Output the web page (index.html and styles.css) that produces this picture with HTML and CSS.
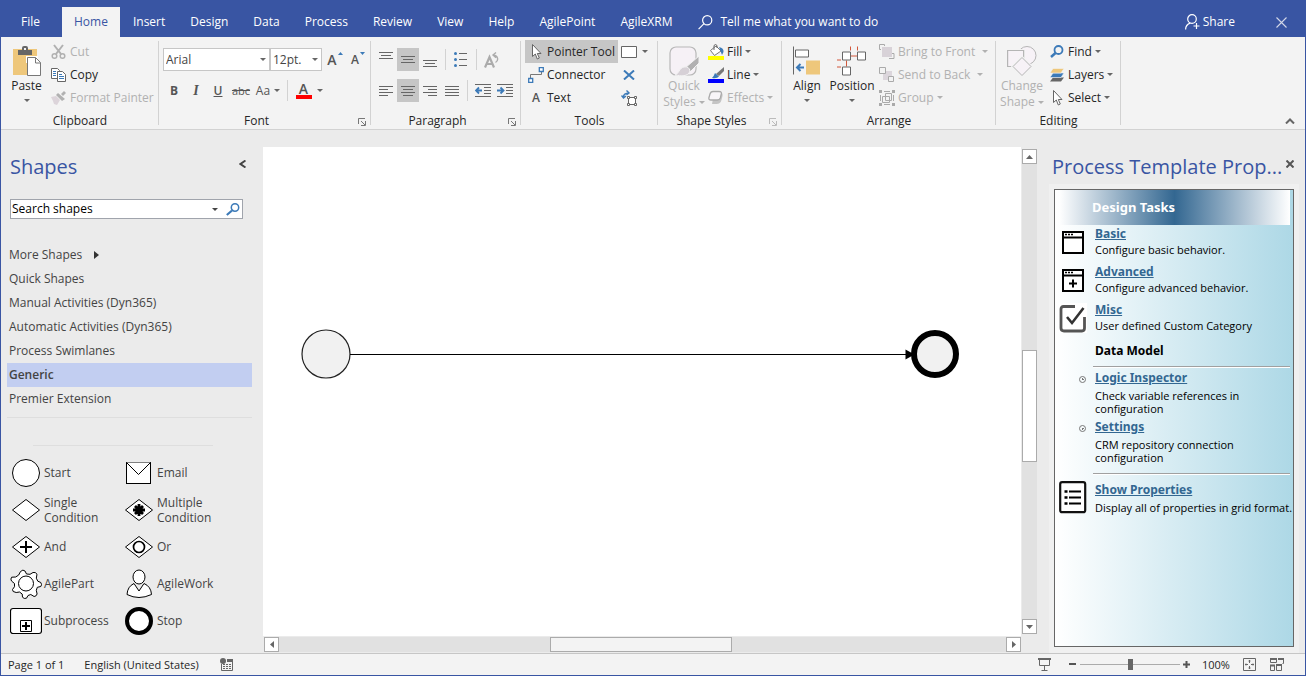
FILE: index.html
```html
<!DOCTYPE html>
<html lang="en">
<head>
<meta charset="utf-8">
<title>Process Designer</title>
<link rel="stylesheet" href="styles.css">
</head>
<body>
<div class="app">
  <header class="titlebar">
    <nav class="tabs">
      <a class="tab tab-file" href="#">File</a>
      <a class="tab tab-active" href="#">Home</a>
      <a class="tab" href="#">Insert</a>
      <a class="tab" href="#">Design</a>
      <a class="tab" href="#">Data</a>
      <a class="tab" href="#">Process</a>
      <a class="tab" href="#">Review</a>
      <a class="tab" href="#">View</a>
      <a class="tab" href="#">Help</a>
      <a class="tab" href="#">AgilePoint</a>
      <a class="tab" href="#">AgileXRM</a>
    </nav>
    <button class="title-btn tell">
      <svg width="15" height="15" viewBox="0 0 15 15" fill="none" stroke="#fff" stroke-width="1.2"><circle cx="9.2" cy="5.3" r="4.6"/><path d="M6 8.700 0.600 14.200"/></svg>
      Tell me what you want to do
    </button>
    <button class="title-btn share">
      <svg width="15" height="16" viewBox="0 0 15 16" fill="none" stroke="#fff" stroke-width="1.2"><circle cx="7" cy="5" r="4.3"/><path d="M0.600 15.500c0-3.600 2.200-5.600 4.800-6.400M8.500 12h6M11.500 9v6"/></svg>
      Share
    </button>
    <button class="title-btn close" aria-label="Close">
      <svg width="11" height="11" viewBox="0 0 11 11" stroke="#d3d8e8" stroke-width="1.1"><path d="M0.500 0.500l10 10M10.500 0.500l-10 10"/></svg>
    </button>
  </header>

  <section class="ribbon">
    <div class="group g-clipboard">
      <div class="group-body">
        <button class="big big-paste">
          <svg width="29" height="31" viewBox="0 0 29 31"><path d="M1 3h24v26H1z" fill="#eec77b"/><path d="M6 4h4V2Q10 0 12 0h2Q16 0 16 2v2h4v5H6z" fill="#666"/><path d="M12 2h2v2h-2z" fill="#f3f3f3"/><path d="M14 10h12v7h-12z" fill="#fff"/><path d="M15.500 11.500h8l5 5v13H15.500z" fill="#fff" stroke="#777"/><path d="M23.500 11.500v5.500h5" fill="none" stroke="#777"/></svg>
          <span>Paste</span><i class="caret"></i>
        </button>
        <div class="stack">
          <button class="cmd off"><svg width="16" height="16" viewBox="0 0 16 16" fill="none" stroke="#b1b1b1" stroke-width="1.500"><circle cx="3.500" cy="12" r="2.300"/><circle cx="11.500" cy="12" r="2.300"/><path d="M5 10 12 1M10 10 3 1" stroke-width="2"/></svg>Cut</button>
          <button class="cmd"><svg width="16" height="16" viewBox="0 0 16 16" fill="#fff" stroke="#666"><path d="M.5 1.500h6l2 2v8h-8z"/><path d="M6.500 4.500h5l3 3v7h-8z"/><path d="M2 4.500h3M2 6.500h3M2 8.500h3M8 7.500h3M8 9.500h5M8 11.500h5" stroke="#3c7ab8"/></svg>Copy</button>
          <button class="cmd off"><svg width="16" height="16" viewBox="0 0 16 16"><path d="M0 7l5-1 4 4-3 5-3-1-1-3z" fill="#dcd4da"/><path d="M5 5l2-2 7 6-3 2z" fill="#b1b1b1"/><path d="M10 4 13 1l2 2-3 3z" fill="#b1b1b1"/></svg>Format Painter</button>
        </div>
      </div>
      <div class="group-label">Clipboard</div>
    </div>

    <div class="group g-font">
      <div class="group-body rows">
        <div class="row">
          <span class="combo combo-font"><select aria-label="Font"><option>Arial</option></select><i class="caret"></i></span>
          <span class="combo combo-size"><select aria-label="Font size"><option>12pt.</option></select><i class="caret"></i></span>
          <button class="tool t-grow" aria-label="Increase font size"><b>A</b><svg width="5" height="3" viewBox="0 0 5 3"><path d="M0 3h5L2.500 0z" fill="#3c7ab8"/></svg></button>
          <button class="tool t-shrink" aria-label="Decrease font size"><b>A</b><svg width="5" height="3" viewBox="0 0 5 3"><path d="M0 0h5L2.500 3z" fill="#3c7ab8"/></svg></button>
        </div>
        <div class="row">
          <button class="tool t-b">B</button>
          <button class="tool t-i">I</button>
          <button class="tool t-u">U</button>
          <button class="tool t-s">abc</button>
          <button class="tool t-case">Aa<i class="caret"></i></button>
          <i class="vsep"></i>
          <button class="tool t-color"><span>A</span><i class="caret"></i></button>
        </div>
      </div>
      <div class="group-label">Font<svg class="launch" width="8" height="8" viewBox="0 0 8 8" fill="none" stroke="#777"><path d="M0.500 6V0.500H7M3 3l4 4M7.500 3v4.500H3"/></svg></div>
    </div>

    <div class="group g-para">
      <div class="group-body rows">
        <div class="row">
          <button class="tool" aria-label="Align top"><svg width="14" height="15" viewBox="0 0 14 15" stroke="#666"><path d="M0 .5h14M2 3.500h10M0 6.500h14"/></svg></button>
          <button class="tool on" aria-label="Align middle"><svg width="14" height="9" viewBox="0 0 14 9" stroke="#666"><path d="M0 1.500h14M2 4.500h10M0 7.500h14"/></svg></button>
          <button class="tool" aria-label="Align bottom"><svg width="14" height="15" viewBox="0 0 14 15" stroke="#666"><path d="M0 8.500h14M2 11.500h10M0 14.500h14"/></svg></button>
          <i class="vsep"></i>
          <button class="tool" aria-label="Bullets"><svg width="14" height="15" viewBox="0 0 14 15"><g fill="#3c7ab8"><circle cx="1.500" cy="1.500" r="1.500"/><circle cx="1.500" cy="7.500" r="1.500"/><circle cx="1.500" cy="13.500" r="1.500"/></g><path d="M5 1.500h8M5 7.500h8M5 13.500h8" stroke="#666"/></svg></button>
          <i class="vsep"></i>
          <button class="tool t-rotate" aria-label="Rotate text"><svg width="16" height="16" viewBox="0 0 16 16" fill="none" stroke="#ababab"><path d="M1 15.500 5.500 5 10 15.500M3 12h5.500" stroke-width="2.200"/><path d="M11.500 10.500C15 8.500 14 3.500 9.500 3M12 .5 9 3l3 2.800" stroke-width="1.400"/></svg></button>
        </div>
        <div class="row">
          <button class="tool" aria-label="Align left"><svg width="14" height="10" viewBox="0 0 14 10" stroke="#666"><path d="M0 .5h14M0 3.500h9M0 6.500h14M0 9.500h9"/></svg></button>
          <button class="tool on" aria-label="Center"><svg width="14" height="10" viewBox="0 0 14 10" stroke="#666"><path d="M0 .5h14M2 3.500h10M0 6.500h14M2 9.500h10"/></svg></button>
          <button class="tool" aria-label="Align right"><svg width="14" height="10" viewBox="0 0 14 10" stroke="#666"><path d="M0 .5h14M5 3.500h9M0 6.500h14M5 9.500h9"/></svg></button>
          <button class="tool" aria-label="Justify"><svg width="14" height="10" viewBox="0 0 14 10" stroke="#666"><path d="M0 .5h14M0 3.500h14M0 6.500h14M0 9.500h14"/></svg></button>
          <i class="vsep"></i>
          <button class="tool" aria-label="Decrease indent"><svg width="16" height="13" viewBox="0 0 16 13" fill="none" stroke="#666"><path d="M0 .5h16M9 3.500h7M9 6.500h7M9 9.500h7M0 12.500h16"/><path d="M7 6.500H1M4 3.500l-3 3 3 3" stroke="#3c7ab8" stroke-width="1.800"/></svg></button>
          <button class="tool" aria-label="Increase indent"><svg width="16" height="13" viewBox="0 0 16 13" fill="none" stroke="#666"><path d="M0 .5h16M9 3.500h7M9 6.500h7M9 9.500h7M0 12.500h16"/><path d="M0 6.500h6M3.500 3.500l3 3-3 3" stroke="#3c7ab8" stroke-width="1.800"/></svg></button>
        </div>
      </div>
      <div class="group-label">Paragraph<svg class="launch" width="8" height="8" viewBox="0 0 8 8" fill="none" stroke="#777"><path d="M0.500 6V0.500H7M3 3l4 4M7.500 3v4.500H3"/></svg></div>
    </div>

    <div class="group g-tools">
      <div class="group-body">
        <div class="stack stack-tools">
          <button class="cmd on"><svg width="16" height="16" viewBox="0 0 16 16"><path d="M4.500 .5v12l2.800-2.500 2 5 2-1-2-4.500h3.700z" fill="#fff" stroke="#666"/></svg>Pointer Tool</button>
          <button class="cmd"><svg width="16" height="16" viewBox="0 0 16 16" fill="none"><path d="M2.500 11V7.500h11V5" stroke="#777"/><path d="M.700 11.500h4v4h-4zM11.300.5h4v4h-4z" fill="#fff" stroke="#3c7ab8" stroke-width="1.300"/></svg>Connector</button>
          <button class="cmd"><b class="glyph">A</b>Text</button>
        </div>
        <div class="stack stack-mini">
          <button class="cmd" aria-label="Rectangle"><svg width="16" height="12" viewBox="0 0 16 12"><path d="M.5.500h15v11H.5z" fill="#fff" stroke="#666"/></svg><i class="caret"></i></button>
          <button class="cmd" aria-label="Connection point"><svg width="16" height="10" viewBox="0 0 16 10"><path d="M3 .500l10 9M13 .500l-10 9" stroke="#3c7ab8" stroke-width="2"/></svg></button>
          <button class="cmd" aria-label="Text block"><svg width="16" height="16" viewBox="0 0 16 16" fill="#fff" stroke="#666"><path d="M7.500 7.500h7v7h-7z"/><path d="M6.500 6.500h2v2h-2zM13.500 6.500h2v2h-2zM6.500 13.500h2v2h-2zM13.500 13.500h2v2h-2z"/><path d="M2.500 8C2 5 4 3 8 3M5.500 0.500 8 3 5.500 5M.5 5.500 2.500 8 5 6" fill="none" stroke="#3c7ab8" stroke-width="1.400"/></svg></button>
        </div>
      </div>
      <div class="group-label">Tools</div>
    </div>

    <div class="group g-styles">
      <div class="group-body">
        <button class="big big-quick off">
          <svg width="30" height="31" viewBox="0 0 30 31"><rect x="1" y="1" width="26" height="28" rx="6" fill="#f6f1f6" stroke="#b8b8b8" stroke-width="1.200"/><path d="M30 10v7l-9 9-5-4z" fill="#b1b0b1" stroke="#f3f3f3"/><path d="M15 21q5-1 6 4c-2 6-9 5-15 4 4-1 4-7 9-8z" fill="#d6d0d6" stroke="#f3f3f3"/></svg>
          <span>Quick<br>Styles <i class="caret"></i></span>
        </button>
        <div class="stack">
          <button class="cmd"><svg width="16" height="16" viewBox="0 0 16 16"><path d="M2.500 6.500 8 2l5 5-6.500 4.500z" fill="#fff" stroke="#777"/><path d="M6 6V1.500Q7.500-.5 9 1.500V4" fill="none" stroke="#666"/><path d="M11 3q5 1 4.500 5L14 11z" fill="#3c7ab8"/><path d="M0 12h16v4H0z" fill="#ff0"/></svg>Fill<i class="caret"></i></button>
          <button class="cmd"><svg width="16" height="16" viewBox="0 0 16 16"><path d="M16 0v4l-5 5-3-2z" fill="#777"/><path d="M7 6l4 3.500Q9 12 4 11 6 9 7 6z" fill="#3c7ab8"/><path d="M0 12h16v4H0z" fill="#00f"/></svg>Line<i class="caret"></i></button>
          <button class="cmd off"><svg width="16" height="16" viewBox="0 0 16 16"><path d="M6 3h7q2 0 1.500 3l-1 4q-1 4-5 4H4z" fill="#c4c4c4"/><path d="M5 1.500h6q3 0 2.300 2.500l-1 4q-.6 2-3 2H3Q.3 10 1 7.500l1-3.500q.7-2.500 3-2.500z" fill="#f8f5f8" stroke="#aaa" stroke-width="1.300"/></svg>Effects<i class="caret"></i></button>
        </div>
      </div>
      <div class="group-label">Shape Styles<svg class="launch" width="8" height="8" viewBox="0 0 8 8" fill="none" stroke="#bbb"><path d="M0.500 6V0.500H7M3 3l4 4M7.500 3v4.500H3"/></svg></div>
    </div>

    <div class="group g-arrange">
      <div class="group-body">
        <button class="big big-align">
          <svg width="28" height="30" viewBox="0 0 28 30"><path d="M.5 0v28" stroke="#666"/><path d="M2.500 3.500h13v7h-13z" fill="#fff" stroke="#666"/><path d="M13 14h14v14H13z" fill="#eec77b"/><path d="M11 21H4M7.500 17.500 4 21l3.500 3.500" fill="none" stroke="#3c7ab8" stroke-width="2"/></svg>
          <span>Align</span><i class="caret"></i>
        </button>
        <button class="big big-position">
          <svg width="30" height="30" viewBox="0 0 30 30" fill="#fff" stroke="#666"><path d="M13.500 0v4M20.500 0v4M14 9.500h6M9.500 14v6M0 13.500h4M0 20.500h4" stroke="#d2573a" fill="none"/><path d="M5.500 5.500h8v8h-8zM20.500 5.500h8v8h-8zM5.500 20.500h8v8h-8z"/></svg>
          <span>Position</span><i class="caret"></i>
        </button>
        <div class="stack">
          <button class="cmd off"><svg width="16" height="16" viewBox="0 0 16 16" fill="none" stroke="#aaa"><path d="M3 3h10v10H3z" fill="#d8d2d8" stroke="none"/><path d="M.5 5.500v-5h5V2M2 5.500H.5M10 14.500h5v-5H13"/></svg>Bring to Front<i class="caret wide"></i></button>
          <button class="cmd off"><svg width="16" height="16" viewBox="0 0 16 16" fill="none" stroke="#aaa"><path d="M4 4h9v9H4z" fill="#dcd6dc" stroke="none"/><path d="M.5.500h6v6h-6zM9.500 9.500h5v5h-5z" fill="#f3f3f3"/></svg>Send to Back<i class="caret wide"></i></button>
          <button class="cmd off"><svg width="16" height="16" viewBox="0 0 16 16" fill="none" stroke="#aaa"><path d="M5 1.500h6M5 14.500h6M1.500 5v6M14.500 5v6"/><path d="M3.500 6.500h7v6h-7zM6.500 3.500h6v7h-6z"/><path d="M0 0h3v3H0zM13 0h3v3h-3zM0 13h3v3H0zM13 13h3v3h-3z" fill="#aaa" stroke="none"/></svg>Group<i class="caret"></i></button>
        </div>
      </div>
      <div class="group-label">Arrange</div>
    </div>

    <div class="group g-editing">
      <div class="group-body">
        <button class="big big-change off">
          <svg width="30" height="31" viewBox="0 0 30 31" fill="#f7f2f7" stroke="#b5b5b5"><circle cx="20" cy="9.500" r="9"/><path d="M.5 4.500h16v16H.5z" stroke="#f3f3f3" stroke-width="3"/><path d="M.6 4.500h16v16H.6z" stroke-width="1.200"/><path d="M15 11.500l9 9-9 9-9-9z" stroke="#f3f3f3" stroke-width="3"/><path d="M15 11.500l9 9-9 9-9-9z"/></svg>
          <span>Change<br>Shape <i class="caret"></i></span>
        </button>
        <div class="stack">
          <button class="cmd"><svg width="16" height="16" viewBox="0 0 16 16" fill="none" stroke="#3c7ab8"><circle cx="9.500" cy="6" r="4" stroke-width="1.800"/><path d="M6.500 9 2 13" stroke-width="2.500"/></svg>Find<i class="caret"></i></button>
          <button class="cmd"><svg width="16" height="16" viewBox="0 0 16 16"><path d="M4 10.500h11l-3 4H1z" fill="#666"/><path d="M4 6h11l-3 4.500H1z" fill="#3c7ab8" stroke="#f3f3f3" stroke-width=".6"/><path d="M4 1.500h11L12 6H1z" fill="#eec77b" stroke="#f3f3f3" stroke-width=".6"/></svg>Layers<i class="caret"></i></button>
          <button class="cmd"><svg width="16" height="16" viewBox="0 0 16 16"><path d="M4.500 .5v12l2.800-2.500 2 5 2-1-2-4.500h3.700z" fill="#fff" stroke="#666"/></svg>Select<i class="caret"></i></button>
        </div>
      </div>
      <div class="group-label">Editing</div>
    </div>
    <button class="collapse" aria-label="Collapse ribbon"><svg width="10" height="6" viewBox="0 0 10 6" fill="none" stroke="#666" stroke-width="2"><path d="M1 5.500l4-4 4 4"/></svg></button>
  </section>

  <main class="work">
    <aside class="shapes">
      <div class="pane-head">
        <h2>Shapes</h2>
        <button aria-label="Minimize shapes"><svg width="7" height="8" viewBox="0 0 7 8" fill="none" stroke="#444" stroke-width="2"><path d="M6.500 .5 1.500 4l5 3.500"/></svg></button>
      </div>
      <div class="search">
        <input type="text" value="Search shapes" aria-label="Search shapes">
        <i class="caret"></i>
        <button aria-label="Search"><svg width="14" height="13" viewBox="0 0 14 13" fill="none" stroke="#3c7ab8"><circle cx="9" cy="4.500" r="3.700" stroke-width="1.500"/><path d="M6 7.500.8 12" stroke-width="2.200"/></svg></button>
      </div>
      <nav class="stencils">
        <a href="#">More Shapes<i class="arrow-right"></i></a>
        <a href="#">Quick Shapes</a>
        <a href="#">Manual Activities (Dyn365)</a>
        <a href="#">Automatic Activities (Dyn365)</a>
        <a href="#">Process Swimlanes</a>
        <a class="current" href="#">Generic</a>
        <a href="#">Premier Extension</a>
      </nav>
      <hr class="short">
      <div class="palette">
        <div class="shape"><svg width="32" height="30" viewBox="0 0 32 30"><circle cx="16" cy="15" r="13.500" fill="#fff" stroke="#000"/></svg><span>Start</span></div>
        <div class="shape"><svg width="32" height="30" viewBox="0 0 32 30" fill="#fff" stroke="#000"><rect x="3.500" y="4.500" width="24" height="21"/><path d="M3.500 4.500l12 12 12-12"/></svg><span>Email</span></div>
        <div class="shape"><svg width="32" height="30" viewBox="0 0 32 30"><path d="M16 4.500 29.500 15 16 25.500 2.500 15z" fill="#fff" stroke="#000"/></svg><span>Single Condition</span></div>
        <div class="shape"><svg width="32" height="30" viewBox="0 0 32 30"><path d="M16 4.500 29.500 15 16 25.500 2.500 15z" fill="#fff" stroke="#000"/><path d="M16 9v12M10 15h12M12 11l8 8M20 11l-8 8" stroke="#000" stroke-width="2.800"/></svg><span>Multiple Condition</span></div>
        <div class="shape"><svg width="32" height="30" viewBox="0 0 32 30"><path d="M16 4.500 29.500 15 16 25.500 2.500 15z" fill="#fff" stroke="#000"/><path d="M16 9v12M10 15h12" stroke="#000" stroke-width="2"/></svg><span>And</span></div>
        <div class="shape"><svg width="32" height="30" viewBox="0 0 32 30" fill="#fff" stroke="#000"><path d="M16 4.500 29.500 15 16 25.500 2.500 15z"/><circle cx="16" cy="15" r="5.500" stroke-width="1.700"/></svg><span>Or</span></div>
        <div class="shape"><svg width="32" height="30" viewBox="0 0 32 30" fill="#fff" stroke="#000"><path d="M10.500 2.500Q13 0 15 2l1.500 3 3.500.3 3-1.800q2.500-.7 4 1.700l-.7 4 1.500 3 3 1.300q1.500 2.300 0 4l-3.500.8-1 3 .8 3.700q-.8 2.500-3 2.500l-3.300-2-2.800 1-1.500 2.700q-2.500 1-4-1l-.3-3.200-2.700-2-3.300.5Q2 23 2.500 20.500l2-2.800V14.500L1.500 12q-1.300-2 .2-3.800l4-.2 3-2z"/><circle cx="16" cy="14.500" r="7.500"/></svg><span>AgilePart</span></div>
        <div class="shape"><svg width="32" height="30" viewBox="0 0 32 30" fill="#fff" stroke="#000"><path d="M11 14.500 16 22l5-7.500q7 3 7.500 11Q22 28.500 16 28.500T4 25.500q.5-8 7-11z"/><ellipse cx="16" cy="8" rx="6" ry="7"/></svg><span>AgileWork</span></div>
        <div class="shape"><svg width="32" height="30" viewBox="0 0 32 30" fill="#fff" stroke="#000"><rect x=".5" y="2.500" width="31" height="25" rx="2.500" stroke-width="1.200"/><path d="M10.500 14.500h11v11h-11z"/><path d="M16 16v8M12 20h8" stroke-width="2"/></svg><span>Subprocess</span></div>
        <div class="shape"><svg width="32" height="30" viewBox="0 0 32 30"><circle cx="16" cy="15" r="12" fill="#fff" stroke="#000" stroke-width="4"/></svg><span>Stop</span></div>
      </div>
    </aside>

    <section class="canvas-area">
      <div class="canvas">
        <svg class="flow" width="660" height="50" viewBox="0 0 660 50"><circle cx="25" cy="25" r="24" fill="#f1f1f1" stroke="#222" stroke-width="1.200"/><path d="M49 25.500h558" stroke="#000"/><path d="M604.500 20.500v10l9-5z"/><circle cx="634" cy="25" r="21" fill="#f1f1f1" stroke="#000" stroke-width="6"/></svg>
      </div>
      <div class="scroll scroll-v">
        <button aria-label="Scroll up"><svg width="7" height="4" viewBox="0 0 7 4"><path d="M0 4h7L3.500 0z" fill="#666"/></svg></button>
        <div class="track"><div class="thumb"></div></div>
        <button aria-label="Scroll down"><svg width="7" height="4" viewBox="0 0 7 4"><path d="M0 0h7L3.500 4z" fill="#666"/></svg></button>
      </div>
      <div class="scroll scroll-h">
        <button aria-label="Scroll left"><svg width="4" height="7" viewBox="0 0 4 7"><path d="M4 0v7L0 3.500z" fill="#666"/></svg></button>
        <div class="track"><div class="thumb"></div></div>
        <button aria-label="Scroll right"><svg width="4" height="7" viewBox="0 0 4 7"><path d="M0 0v7l4-3.500z" fill="#666"/></svg></button>
      </div>
    </section>

    <aside class="props">
      <div class="pane-head">
        <h2>Process Template Prop...</h2>
        <button aria-label="Close pane"><svg width="8" height="8" viewBox="0 0 8 8" stroke="#555" stroke-width="2"><path d="M.5.500l7 7M7.500.500l-7 7"/></svg></button>
      </div>
      <div class="props-wrap">
        <div class="tasks">
          <h3>Design Tasks</h3>
          <div class="task">
            <svg width="28" height="28" viewBox="0 0 28 28"><path d="M4 5h20v21H4z" fill="#fff" stroke="#000" stroke-width="2"/><path d="M4 10.500h20" stroke="#000" stroke-width="2"/><path d="M6 7.500h8" stroke="#000" stroke-width="1.500" stroke-dasharray="2 1"/></svg>
            <div><a href="#">Basic</a><p>Configure basic behavior.</p></div>
          </div>
          <div class="task">
            <svg width="28" height="28" viewBox="0 0 28 28"><path d="M4 5h20v21H4z" fill="#fff" stroke="#000" stroke-width="2"/><path d="M4 10.500h20M14 14.500v8M10 18.500h8" stroke="#000" stroke-width="2"/><path d="M6 7.500h8" stroke="#000" stroke-width="1.500" stroke-dasharray="2 1"/></svg>
            <div><a href="#">Advanced</a><p>Configure advanced behavior.</p></div>
          </div>
          <div class="task">
            <svg width="28" height="30" viewBox="0 0 28 30"><path d="M0 0h28v30H0z" fill="#fff"/><path d="M16 3.500H4.500Q2 3.500 2 6v19q0 3 3 3h18q2.500 0 2.500-3V14" fill="none" stroke="#555" stroke-width="2.800"/><path d="M8 14l5 6L24.500 5" fill="none" stroke="#333" stroke-width="2.600"/></svg>
            <div><a href="#">Misc</a><p>User defined Custom Category</p></div>
          </div>
          <h4>Data Model</h4>
          <hr>
          <ul>
            <li><a href="#">Logic Inspector</a><p>Check variable references in configuration</p></li>
            <li><a href="#">Settings</a><p>CRM repository connection configuration</p></li>
          </ul>
          <hr>
          <div class="task task-last">
            <svg width="28" height="33" viewBox="0 0 28 33"><rect x="1.200" y="1.200" width="25" height="30" rx="2" fill="#fff" stroke="#111" stroke-width="2.200"/><path d="M10 10.500h12M10 16.500h12M10 22.500h12" stroke="#000" stroke-width="1.800"/><path d="M5.500 10.500h3M5.500 16.500h3M5.500 22.500h3" stroke="#000" stroke-width="2.400"/></svg>
            <div><a href="#">Show Properties</a><p>Display all of properties in grid format.</p></div>
          </div>
        </div>
      </div>
    </aside>
  </main>

  <footer class="status">
    <span class="page-no">Page 1 of 1</span>
    <span>English (United States)</span>
    <button aria-label="Record macro"><svg width="13" height="13" viewBox="0 0 13 13"><path d="M1.500 6v6.500h11V3" fill="none" stroke="#666"/><circle cx="3" cy="3" r="3" fill="#666"/><path d="M7 1h6v3H7z" fill="#666"/><path d="M3 6.500h8M3 8.500h8M3 10.500h8" stroke="#666" stroke-dasharray="2 1"/></svg></button>
    <div class="zoom">
      <button aria-label="Presentation mode"><svg width="13" height="13" viewBox="0 0 13 13" fill="none" stroke="#666"><path d="M0 1h13" stroke-width="2"/><path d="M1.500 2v5.500h10V2M6.500 8v4M3.500 12.500h6"/></svg></button>
      <button class="zoom-out" aria-label="Zoom out"><svg width="7" height="7" viewBox="0 0 7 7"><path d="M0 3h7" stroke="#555" stroke-width="2"/></svg></button>
      <input type="range" min="0" max="100" value="50" aria-label="Zoom">
      <button class="zoom-in" aria-label="Zoom in"><svg width="7" height="7" viewBox="0 0 7 7"><path d="M0 3.500h7M3.500 0v7" stroke="#555" stroke-width="2"/></svg></button>
      <span class="pct">100%</span>
      <button class="fit" aria-label="Fit page"><svg width="13" height="13" viewBox="0 0 13 13" fill="none" stroke="#666"><path d="M.5.500h12v12H.5z"/><path d="M6.500 2v3M6.500 8v3M2 6.500h3M8 6.500h3M5.500 3h2M5.500 10h2M3 5.500v2M10 5.500v2"/></svg></button>
      <button class="windows" aria-label="Switch windows"><svg width="14" height="13" viewBox="0 0 14 13" fill="none" stroke="#666"><path d="M.5 1.500h6v3h-6zM8.500 1.500h5v4h-1M.5 7.500h4v5h-4zM6.500 6.500h5v6h-5z"/><path d="M0 1h7M8 1h6M0 7.500h5M6 7h6" stroke-width="2"/></svg></button>
    </div>
  </footer>
</div>
</body>
</html>
```

FILE: styles.css
```css
* { box-sizing: border-box; }
body {
  margin: 0;
  font-family: "Open Sans", "Noto Sans", sans-serif;
  font-size: 12px;
  line-height: 16px;
  color: #262626;
  background: #ebebeb;
}
button, input, select { font: inherit; color: inherit; }
button { border: 0; padding: 0; background: none; }
a { color: inherit; text-decoration: none; }
h2, h3, h4, p, ul { margin: 0; padding: 0; }
svg { display: block; flex: none; }

.app {
  display: flex;
  flex-direction: column;
  height: 100vh;
  border: 1px solid #3955a3;
  border-top: 0;
}

.caret {
  display: inline-block;
  flex: none;
  border: 3px solid transparent;
  border-top-color: #666;
  border-bottom: 0;
}
.off { color: #b1b1b1; }
.off .caret { border-top-color: #b1b1b1; }

/* title bar */
.titlebar {
  display: flex;
  align-items: flex-end;
  height: 37px;
  flex: none;
  background: #3955a3;
  color: #fff;
}
.tabs { display: flex; padding-left: 5px; }
.tab { padding: 7px 12px 7px 13px; height: 30px; }
.tab-file { padding: 7px 22px 7px 15px; }
.tab-active { background: #f3f3f3; color: #3955a3; padding: 7px 12px; }
.title-btn { display: flex; align-items: center; height: 30px; gap: 7px; }
.tell { margin-left: 14px; }
.share { margin-left: auto; gap: 3px; }
.close { margin: 0 18px 0 41px; }

/* ribbon */
.ribbon {
  position: relative;
  display: flex;
  flex: none;
  height: 93px;
  padding: 3px 0 0;
  background: #f3f3f3;
  border-bottom: 1px solid #d2d2d2;
}
.group { position: relative; display: flex; flex-direction: column; }
.group::after {
  content: "";
  position: absolute;
  right: 0;
  top: 1px;
  bottom: 4px;
  width: 1px;
  background: #d2d2d2;
}
.g-clipboard { width: 158px; }
.g-font { width: 212px; }
.g-para { width: 150px; }
.g-tools { width: 137px; }
.g-styles { width: 124px; }
.g-arrange { width: 214px; }
.g-editing { width: 125px; }
.group-body { display: flex; flex: none; height: 69px; }
.group-label { position: relative; flex: none; padding-top: 4px; text-align: center; }
.g-font .group-label, .g-para .group-label, .g-styles .group-label { padding-right: 17px; }
.launch { position: absolute; right: 5px; top: 9px; }

.stack { display: grid; grid-template-rows: repeat(3, 23px); justify-items: start; }
.cmd { display: flex; align-items: center; gap: 3px; height: 23px; white-space: nowrap; }
.on { background: #c6c6c6; }
.caret.wide { margin-left: 4px; }
.stack-tools { width: 93px; margin-left: 4px; }
.stack-tools .cmd { width: 93px; padding-left: 3px; }
.stack-mini { margin-left: 3px; }
.stack-mini .cmd { gap: 5px; }
.glyph { width: 16px; text-align: center; font-weight: 600; color: #555; }

.big { display: flex; flex-direction: column; align-items: center; padding-top: 5px; }
.big > svg { height: 33px; }
.big .caret { margin-top: 5px; }
.big span .caret { margin: 0 0 2px; }
.big-paste { width: 49px; margin-left: 1px; }
.big-quick { width: 46px; margin: 0 1px 0 3px; }
.big-align { width: 44px; margin-left: 3px; }
.big-position { width: 44px; margin: 0 5px 0 1px; }
.big-change { width: 52px; margin-right: 1px; }

.rows { flex-direction: column; gap: 8px; padding: 8px 0 0 4px; }
.row { display: flex; align-items: center; height: 23px; }
.combo { position: relative; height: 23px; }
.combo select {
  width: 100%;
  height: 23px;
  padding: 0 2px;
  border: 1px solid #c6c6c6;
  border-radius: 0;
  background: #fff;
  appearance: none;
  color: #444;
}
.combo .caret { position: absolute; right: 4px; top: 10px; }
.combo-font { width: 107px; }
.combo-size { width: 52px; }
.tool {
  display: flex;
  align-items: center;
  justify-content: center;
  width: 22px;
  height: 23px;
  color: #555;
}
.t-grow, .t-shrink { gap: 1px; align-items: flex-start; padding-top: 4px; }
.t-grow { width: 26px; font-size: 14px; }
.t-shrink { width: 20px; }
.t-grow b, .t-shrink b { font-weight: 600; }
.t-b { font-weight: 700; }
.t-i { font-family: "Liberation Serif", serif; font-style: italic; font-weight: 700; font-size: 14px; }
.t-u { font-weight: 600; text-decoration: underline; }
.t-s { width: 24px; font-size: 11px; text-decoration: line-through; }
.t-case { width: 30px; gap: 4px; }
.t-color { gap: 5px; margin-left: 3px; width: 28px; }
.t-color span {
  width: 16px;
  height: 16px;
  line-height: 12px;
  font-size: 14px;
  font-weight: 600;
  border-bottom: 4px solid #f00;
}
.vsep { width: 1px; height: 21px; margin: 0 4px; background: #d2d2d2; }
.collapse { position: absolute; right: 10px; bottom: 5px; }

/* work area */
.work {
  display: grid;
  grid-template-columns: 262px minmax(0, 1fr) 268px;
  flex: 1;
  min-height: 0;
}
.pane-head { display: flex; align-items: flex-start; justify-content: space-between; }
.pane-head h2 { font-size: 20px; line-height: 28px; font-weight: 400; color: #3955a3; white-space: nowrap; }
.pane-head button { margin-top: 7px; }

.shapes { padding: 23px 11px 0 6px; color: #444; }
.shapes .pane-head { padding: 0 6px 0 3px; }
.search {
  display: flex;
  align-items: center;
  height: 20px;
  margin: 18px 9px 0 3px;
  padding-right: 2px;
  background: #fff;
  border: 1px solid #a0a4ac;
}
.search input {
  flex: 1;
  min-width: 0;
  padding: 0 1px;
  border: 0;
  background: none;
  outline: 0;
  color: #000;
}
.search .caret { margin-right: 8px; border-top-color: #444; }
.stencils { display: grid; margin-top: 24px; padding-bottom: 6px; border-bottom: 1px solid #dedede; }
.stencils a { display: flex; align-items: center; height: 24px; padding-left: 2px; }
.stencils .current { background: #c2cef1; font-weight: 600; }
.arrow-right { margin-left: 12px; border: 4px solid transparent; border-left: 5px solid #333; border-right: 0; }
.short { width: 180px; margin: 27px 0 8px 26px; border: 0; border-top: 1px solid #dedede; }
.palette { display: grid; grid-template-columns: 113px 113px; grid-auto-rows: 37px; padding-left: 3px; }
.shape { display: flex; align-items: center; gap: 2px; line-height: 15px; }

.canvas-area {
  display: grid;
  grid-template-columns: minmax(0, 1fr) 16px;
  grid-template-rows: minmax(0, 1fr) 17px;
  padding-top: 17px;
}
.canvas { position: relative; background: #fff; }
.flow { position: absolute; left: 38px; top: 182px; }
.scroll { display: flex; }
.scroll button {
  display: flex;
  align-items: center;
  justify-content: center;
  width: 15px;
  height: 15px;
  background: #fff;
  border: 1px solid #ababab;
}
.scroll .track { display: flex; flex: 1; background: #e1e1e1; }
.scroll .thumb { background: #fff; border: 1px solid #ababab; }
.scroll-v { flex-direction: column; padding: 2px 0 2px 1px; }
.scroll-v .track { flex-direction: column; padding-top: 186px; }
.scroll-v .thumb { height: 112px; }
.scroll-h { padding: 1px 0 1px 1px; }
.scroll-h .track { padding-left: 271px; }
.scroll-h .thumb { width: 182px; background: #f3f3f3; }

/* task pane */
.props {
  display: flex;
  flex-direction: column;
  min-width: 0;
  margin: 23px 0 0 12px;
  padding-right: 6px;
}
.props .pane-head { padding: 0 5px 0 3px; }
.props-wrap { flex: 1; display: flex; margin-top: 3px; padding: 5px 5px 6px; background: #f0f0f0; }
.tasks {
  flex: 1;
  min-width: 0;
  border: 1px solid #666;
  background: linear-gradient(90deg, #fff, #add8e6);
  padding: 0 3px 0 4px;
  font-size: 11px;
  line-height: 13px;
  color: #000;
}
.tasks h3 {
  padding-left: 33px;
  font: 700 13px/35px "Noto Sans", sans-serif;
  color: #fff;
  background: linear-gradient(90deg, #fff, #336791 50%, #fff);
}
.tasks a { font: 700 12px/14px "Noto Sans", sans-serif; color: #336791; text-decoration: underline; }
.tasks p { white-space: nowrap; }
.task { display: flex; gap: 8px; height: 38px; padding-top: 2px; }
.task a { display: block; margin-bottom: 2px; }
.tasks h4 { margin: 5px 0 8px 36px; font: 700 12px/14px "Noto Sans", sans-serif; }
.tasks hr { margin: 0 0 0 34px; border: 0; border-top: 1px solid #a0a0a0; border-bottom: 1px solid #fff; }
.tasks ul { list-style: none; padding: 3px 0 4px 36px; }
.tasks li { position: relative; padding-bottom: 5px; }
.tasks li p { width: 160px; margin-top: 4px; white-space: normal; }
.tasks li a { display: block; }
.tasks li::before {
  content: "";
  position: absolute;
  left: -16px;
  top: 5px;
  width: 5px;
  height: 5px;
  border: 1px solid #777;
  border-radius: 50%;
  background: radial-gradient(#777 1px, transparent 1px);
}
.task-last { height: auto; padding-top: 6px; }
.task-last a { margin: 2px 0 4px; }

/* status bar */
.status {
  display: flex;
  align-items: center;
  flex: none;
  height: 22px;
  padding: 0 21px 0 7px;
  background: #f3f3f3;
  border-top: 1px solid #c6c6c6;
  font-size: 11px;
}
.page-no { margin-right: 20px; }
.status > button { margin-left: 21px; }
.zoom { display: flex; align-items: center; margin-left: auto; }
.zoom-out { margin-left: 18px; }
.zoom input {
  appearance: none;
  width: 100px;
  height: 12px;
  margin: 0 3px 0 4px;
  background: linear-gradient(#ababab, #ababab) center / 100% 1px no-repeat;
}
.zoom input::-webkit-slider-thumb { appearance: none; width: 5px; height: 11px; background: #666; }
.pct { width: 27px; margin-left: 12px; }
.fit { margin: 0 14px; }
```
